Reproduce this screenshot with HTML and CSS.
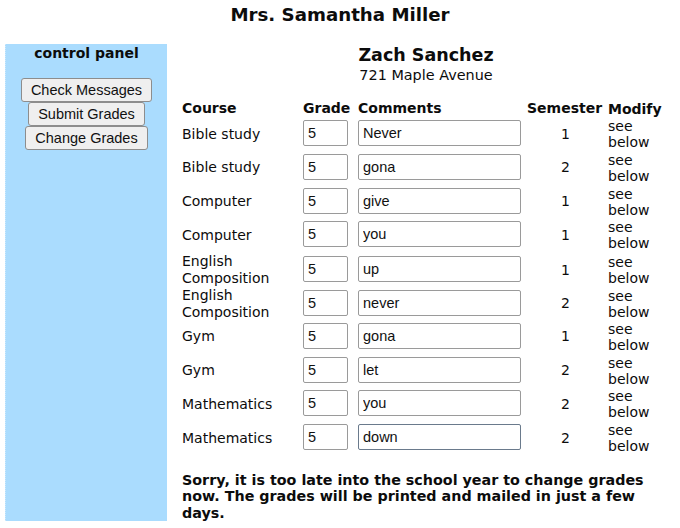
FILE: index.html
```html
<!DOCTYPE html>
<html>
<head>
<meta charset="utf-8">
<link rel="stylesheet" href="styles.css">
</head>
<body>
<h1 class="teacher">Mrs. Samantha Miller</h1>
<div class="layout">
  <aside class="sidebar">
    <div class="panel-title">control panel</div>
    <div class="buttons">
      <button class="btn">Check Messages</button>
      <button class="btn">Submit Grades</button>
      <button class="btn">Change Grades</button>
    </div>
  </aside>
  <main class="main">
    <div class="student">Zach Sanchez</div>
    <div class="address">721 Maple Avenue</div>
    <div class="grades">
      <div class="row head">
        <div>Course</div><div>Grade</div><div>Comments</div><div>Semester</div><div class="mod">Modify</div>
      </div>
      <div class="row"><div class="course">Bible study</div><div><input class="grade" value="5"></div><div><input class="comment" value="Never"></div><div class="sem">1</div><div class="mod">see<br>below</div></div>
      <div class="row"><div class="course">Bible study</div><div><input class="grade" value="5"></div><div><input class="comment" value="gona"></div><div class="sem">2</div><div class="mod">see<br>below</div></div>
      <div class="row"><div class="course">Computer</div><div><input class="grade" value="5"></div><div><input class="comment" value="give"></div><div class="sem">1</div><div class="mod">see<br>below</div></div>
      <div class="row"><div class="course">Computer</div><div><input class="grade" value="5"></div><div><input class="comment" value="you"></div><div class="sem">1</div><div class="mod">see<br>below</div></div>
      <div class="row"><div class="course">English Composition</div><div><input class="grade" value="5"></div><div><input class="comment" value="up"></div><div class="sem">1</div><div class="mod">see<br>below</div></div>
      <div class="row"><div class="course">English Composition</div><div><input class="grade" value="5"></div><div><input class="comment" value="never"></div><div class="sem">2</div><div class="mod">see<br>below</div></div>
      <div class="row"><div class="course">Gym</div><div><input class="grade" value="5"></div><div><input class="comment" value="gona"></div><div class="sem">1</div><div class="mod">see<br>below</div></div>
      <div class="row"><div class="course">Gym</div><div><input class="grade" value="5"></div><div><input class="comment" value="let"></div><div class="sem">2</div><div class="mod">see<br>below</div></div>
      <div class="row"><div class="course">Mathematics</div><div><input class="grade" value="5"></div><div><input class="comment" value="you"></div><div class="sem">2</div><div class="mod">see<br>below</div></div>
      <div class="row"><div class="course">Mathematics</div><div><input class="grade" value="5"></div><div><input class="comment active" value="down"></div><div class="sem">2</div><div class="mod">see<br>below</div></div>
    </div>
    <p class="notice">Sorry, it is too late into the school year to change grades now. The grades will be printed and mailed in just a few days.</p>
  </main>
</div>
</body>
</html>
```
FILE: styles.css
```css
html, body {
  margin: 0;
  padding: 0;
  background: #fff;
}
body {
  font-family: "DejaVu Sans", Verdana, sans-serif;
  color: #0c0c0c;
  font-size: 14px;
}
.teacher {
  margin: 0 0 18px 0;
  padding-top: 4px;
  font-size: 18.2px;
  line-height: 22px;
  font-weight: bold;
  text-align: center;
}
.layout {
  display: flex;
  align-items: stretch;
  padding-left: 5px;
}
.sidebar {
  width: 161px;
  flex: none;
  background: #aadcfe;
  border-left: 1px dotted #cfe9fb;
  padding-top: 1px;
}
.panel-title {
  font-size: 14px;
  font-weight: bold;
  line-height: 17px;
  text-align: center;
}
.buttons {
  margin-top: 16px;
  display: flex;
  flex-direction: column;
  align-items: center;
}
.btn {
  font-family: "Liberation Sans", Arial, sans-serif;
  font-size: 14.5px;
  height: 24px;
  padding: 0 9px;
  background: #efefef;
  border: 1px solid #8d8d8d;
  border-radius: 3px;
  color: #111;
}
.main {
  padding-left: 15px;
  width: 488px;
}
.student {
  font-size: 17.5px;
  font-weight: bold;
  line-height: 22px;
  text-align: center;
}
.address {
  font-size: 14.4px;
  line-height: 18px;
  text-align: center;
}
.grades {
  margin-top: 16px;
}
.row {
  display: grid;
  grid-template-columns: 121px 55px 169px 77px auto;
  align-items: center;
  height: 33.8px;
}
.row.head {
  height: 16px;
  font-weight: bold;
  line-height: 17px;
}
.course {
  line-height: 16.9px;
  padding-top: 2px;
}
.mod {
  line-height: 16px;
  padding-left: 4px;
  padding-top: 2px;
}
.row > div {
  display: flex;
  align-items: center;
}
.row > .sem {
  justify-content: center;
  padding-top: 1px;
}
.row.head > div {
  display: block;
  padding-top: 0;
}
.grade, .comment {
  font-family: "Liberation Sans", Arial, sans-serif;
  font-size: 14.5px;
  height: 26px;
  box-sizing: border-box;
  padding: 0 4px;
  border: 1px solid #9a9a9a;
  border-radius: 2px;
  background: #fff;
  color: #111;
  margin: 0;
}
.grade {
  width: 45px;
}
.comment {
  width: 163px;
}
.comment.active {
  border-color: #6a7a8c;
  border-width: 1.5px;
}
.notice {
  margin: 18px 0 0 0;
  font-weight: bold;
  font-size: 14.3px;
  line-height: 16.5px;
  max-width: 485px;
}
```
